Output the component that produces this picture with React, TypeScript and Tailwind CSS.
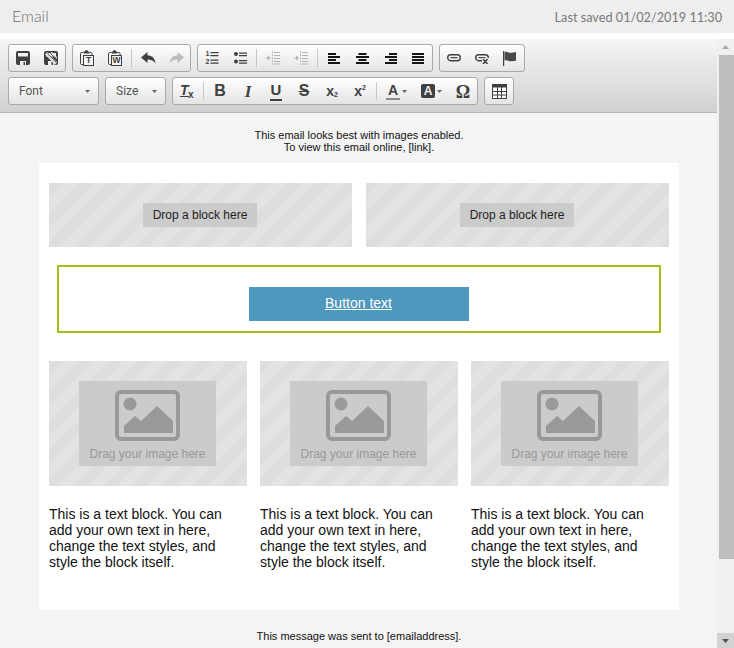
import React from 'react';

const ink = '#3f3f3f';

const Sep = () => (
  <div className="w-[5px] h-full flex items-center justify-center">
    <div className="w-px h-[18px] bg-[#c8c8c8]"></div>
  </div>
);

const Btn = ({ children, wide }: { children: React.ReactNode; wide?: boolean }) => (
  <div className={`${wide ? 'w-[35px]' : 'w-[28px]'} h-full flex items-center justify-center`}>{children}</div>
);

const Group = ({ children }: { children: React.ReactNode }) => (
  <div className="h-[28px] flex border border-[#a9a9a9] rounded-[3px] bg-gradient-to-b from-white to-[#e4e4e4]">{children}</div>
);

const Caret = ({ color = '#666' }: { color?: string }) => (
  <svg width="5" height="3" viewBox="0 0 5 3"><path d="M0 0h5L2.500 3z" fill={color} /></svg>
);

const Select = ({ label, width }: { label: string; width: string }) => (
  <div className={`${width} h-[28px] flex items-center justify-between pl-[10px] pr-[8px] border border-[#a9a9a9] rounded-[3px] bg-gradient-to-b from-white to-[#e4e4e4] text-[12px] text-[#555] [font-family:Roboto,sans-serif]`}>
    <span>{label}</span>
    <Caret />
  </div>
);

const SaveIcon = ({ badge }: { badge?: boolean }) => (
  <svg width="14" height="14" viewBox="0 0 14 14">
    <rect x="0" y="0" width="14" height="14" rx="2" fill={ink} />
    <rect x="2" y="2" width="10" height="3.500" fill="#f0f0f0" />
    <rect x="4" y="10" width="6" height="4" fill="#f0f0f0" />
    <rect x="7.500" y="11" width="1.500" height="3" fill={ink} />
    {badge && <path d="M3 1l10 10-2 3L1 3.500zM8 1l5 5v2L6.500 1.500z" fill="#dcdcdc" />}
    {badge && <path d="M3.500 2.500l8.500 8.500M6 2l7 7" stroke={ink} strokeWidth="0.800" />}
  </svg>
);

const PasteIcon = ({ letter }: { letter: string }) => (
  <span className="relative block w-[14px] h-[16px]">
    <svg width="14" height="16" viewBox="0 0 14 16" className="block">
      <path d="M3 2.500H1.500a1 1 0 0 0-1 1v10a1 1 0 0 0 1 1H3M10 2.500h1a1 1 0 0 1 1 1V5" fill="none" stroke={ink} strokeWidth="1" />
      <path d="M3.500 3.500V1.500h1.500a1.500 1.500 0 0 1 3 0h1.500v2z" fill={ink} />
      <rect x="3.500" y="5.500" width="10" height="10" fill="#f3f3f3" stroke={ink} />
    </svg>
    <span className="absolute left-[4px] top-[6px] w-[9px] text-center text-[8.500px] leading-[9px] font-bold text-[#3f3f3f] [font-family:'Liberation_Sans',sans-serif]">{letter}</span>
  </span>
);

const ArrowIcon = ({ flip, color }: { flip?: boolean; color: string }) => (
  <svg width="15" height="12" viewBox="0 0 15 12" className={flip ? '-scale-x-100' : ''}>
    <path d="M0 5.500L6.500 0v3.500c4.500 0 7.500 2.500 8 8C12.500 8.500 10 7.500 6.500 7.500V11z" fill={color} />
  </svg>
);

const Lines = ({ rows }: { rows: number[][] }) => (
  <svg width="13" height="11" viewBox="0 0 13 11">
    {rows.map(([x, w], i) => (
      <rect key={i} x={x} y={i * 3} width={w} height="2" fill="#161616" />
    ))}
  </svg>
);

const OrderedIcon = () => (
  <span className="relative block w-[13px] h-[14px]">
    <svg width="13" height="14" viewBox="0 0 13 14" className="block">
      <path d="M4.500 1h8v1.200h-8zM4.500 4h8v1.200h-8zM4.500 8.500h8v1.200h-8zM4.500 11.500h8v1.200h-8z" fill={ink} />
    </svg>
    <span className="absolute left-0 top-[-1px] text-[7px] leading-[8px] font-bold text-[#3f3f3f] [font-family:'Liberation_Sans',sans-serif]">1</span>
    <span className="absolute left-0 top-[7px] text-[7px] leading-[8px] font-bold text-[#3f3f3f] [font-family:'Liberation_Sans',sans-serif]">2</span>
  </span>
);

const BulletIcon = () => (
  <svg width="13" height="14" viewBox="0 0 13 14">
    <circle cx="2" cy="3" r="2" fill={ink} />
    <circle cx="2" cy="10.500" r="2" fill={ink} />
    <path d="M5 1.500h8v1.200H5zM5 4h8v1.200H5zM5 9h8v1.200H5zM5 11.500h8v1.200H5z" fill={ink} />
  </svg>
);

const IndentIcon = ({ forward }: { forward?: boolean }) => (
  <svg width="14" height="14" viewBox="0 0 14 14">
    <path d="M6.500 0v14" stroke="#bdbdbd" strokeWidth="1" strokeDasharray="2 1" />
    <path d="M8 1.500h6M8 4.500h6M8 7.500h6M8 10.500h6M8 13h6" stroke="#b5b5b5" strokeWidth="1" />
    {forward ? (
      <path d="M0 6.500h2V4.500L5 7 2 9.500v-2H0z" fill="#b5b5b5" />
    ) : (
      <path d="M5 6.500H3V4.500L0 7l3 2.500v-2h2z" fill="#b5b5b5" />
    )}
  </svg>
);

const LinkIcon = ({ cross }: { cross?: boolean }) => (
  <svg width="14" height="12" viewBox="0 0 14 12">
    <rect x="0.700" y="2.700" width="12.600" height="6" rx="3" fill="none" stroke={ink} strokeWidth="1.400" />
    <path d="M3.500 5.700h7" stroke={ink} strokeWidth="1.200" />
    {cross && <rect x="7" y="6" width="7" height="6" fill="#ececec" />}
    {cross && <path d="M8 7l4.500 5M12.500 7L8 12" stroke={ink} strokeWidth="1.500" />}
  </svg>
);

const FlagIcon = () => (
  <svg width="14" height="15" viewBox="0 0 14 15">
    <path d="M0.600 0v15" stroke={ink} strokeWidth="1.200" />
    <path d="M1.500 1c2.500-1 4 .8 6 .8 2 0 3.500-.4 5.500-.8v8.500c-2 .6-3.500.8-5.500.8-2 0-3.500-1.800-6-.8z" fill="#4a4a4a" />
  </svg>
);

const TableIcon = () => (
  <svg width="15" height="15" viewBox="0 0 15 15">
    <rect x="0.500" y="0.500" width="14" height="14" fill="#fff" stroke={ink} />
    <rect x="0.500" y="0.500" width="14" height="3" fill={ink} />
    <path d="M5.500 3v11M9.500 3v11M1 7.500h13M1 11h13" stroke={ink} />
  </svg>
);

const PictureIcon = () => (
  <svg width="65" height="51" viewBox="0 0 65 51" className="block">
    <rect x="2" y="2" width="61" height="47" rx="4" fill="none" stroke="#999" strokeWidth="4" />
    <circle cx="15" cy="14" r="6.500" fill="#999" />
    <path d="M9 43v-7l11-10 6 5 16-15 16 15v12z" fill="#999" />
  </svg>
);

const Letter = ({ className, children }: { className: string; children: React.ReactNode }) => (
  <span className={`[font-family:'Liberation_Sans',sans-serif] text-[#3f3f3f] leading-none ${className}`}>{children}</span>
);

const stripes = 'bg-[repeating-linear-gradient(135deg,#dedede_0px,#dedede_10.500px,#e3e3e3_10.500px,#e3e3e3_21px)]';

const DropZone = () => (
  <div className={`flex-1 h-[64px] flex items-center justify-center pr-[1px] ${stripes}`}>
    <div className="w-[114px] h-[24px] flex items-center justify-center bg-[#cbcbcb] text-[12px] text-[#222]">Drop a block here</div>
  </div>
);

const ImageColumn = () => (
  <div className="w-[198px]">
    <div className={`h-[125px] flex items-center justify-center pr-[1px] ${stripes}`}>
      <div className="w-[137px] h-[85px] flex flex-col items-center pt-[9px] bg-[#cbcbcb]">
        <PictureIcon />
        <span className="mt-[5px] text-[12px] leading-[16px] text-[#999]">Drag your image here</span>
      </div>
    </div>
    <p className="mt-[20px] text-[14px] leading-[16px] text-[#111]">
      This is a text block. You can add your own text in here, change the text styles, and style the block itself.
    </p>
  </div>
);

export default function App() {
  return (
    <div className="w-[734px] h-[648px] overflow-hidden flex flex-col bg-white [font-family:'Liberation_Sans',Arial,sans-serif]">
      <div className="h-[33px] shrink-0 flex items-center justify-between px-[12px] bg-[#eeeeee] [font-family:Lato,sans-serif]">
        <span className="text-[16px] font-light text-[#6f6f6f] -mt-[2px]">Email</span>
        <span className="text-[12.700px] text-[#7a7a7a] mt-[3px]">Last saved 01/02/2019 11:30</span>
      </div>
      <div className="h-[6px] shrink-0 bg-white"></div>
      <div className="flex-1 flex min-h-0">
        <div className="w-[717px] flex flex-col">
          <div className="h-[74px] shrink-0 flex flex-col gap-[5px] pt-[5px] pl-[8px] border-b border-[#b4b6b4] bg-gradient-to-b from-[#f6f6f6] to-[#cfd1cf]">
            <div className="flex gap-[6px]">
              <Group>
                <Btn><SaveIcon /></Btn>
                <Btn><SaveIcon badge /></Btn>
              </Group>
              <Group>
                <Btn><PasteIcon letter="T" /></Btn>
                <Btn><PasteIcon letter="W" /></Btn>
                <Sep />
                <Btn><ArrowIcon color={ink} /></Btn>
                <Btn><ArrowIcon flip color="#bdbdbd" /></Btn>
              </Group>
              <Group>
                <Btn><OrderedIcon /></Btn>
                <Btn><BulletIcon /></Btn>
                <Sep />
                <Btn><IndentIcon /></Btn>
                <Btn><IndentIcon forward /></Btn>
                <Sep />
                <Btn><Lines rows={[[0, 8], [0, 12], [0, 8], [0, 12]]} /></Btn>
                <Btn><Lines rows={[[2.500, 8], [0, 13], [2.500, 8], [0, 13]]} /></Btn>
                <Btn><Lines rows={[[5, 8], [1, 12], [5, 8], [1, 12]]} /></Btn>
                <Btn><Lines rows={[[0, 12], [0, 12], [0, 12], [0, 12]]} /></Btn>
              </Group>
              <Group>
                <Btn><LinkIcon /></Btn>
                <Btn><LinkIcon cross /></Btn>
                <Btn><FlagIcon /></Btn>
              </Group>
            </div>
            <div className="flex gap-[6px]">
              <Select label="Font" width="w-[91px]" />
              <Select label="Size" width="w-[61px]" />
              <Group>
                <Btn>
                  <span className="relative block w-[16px] h-[16px]">
                    <Letter className="absolute left-[1px] top-0 text-[14px] font-bold italic underline">T</Letter>
                    <Letter className="absolute left-[9px] top-[7px] text-[10px] font-bold">x</Letter>
                  </span>
                </Btn>
                <Sep />
                <Btn><Letter className="text-[16px] font-bold">B</Letter></Btn>
                <Btn><span className="[font-family:'Liberation_Serif',serif] text-[17px] leading-none font-bold italic text-[#3f3f3f]">I</span></Btn>
                <Btn>
                  <span className="flex flex-col items-center">
                    <Letter className="text-[15px] font-bold">U</Letter>
                    <span className="w-[12px] h-[2px] mt-[2px] bg-[#3f3f3f]"></span>
                  </span>
                </Btn>
                <Btn><Letter className="text-[16px] font-bold line-through">S</Letter></Btn>
                <Btn>
                  <span className="flex items-end">
                    <Letter className="text-[14px] font-bold">x</Letter>
                    <Letter className="text-[7px] font-bold">2</Letter>
                  </span>
                </Btn>
                <Btn>
                  <span className="flex items-start">
                    <Letter className="text-[14px] font-bold">x</Letter>
                    <Letter className="text-[7px] font-bold">2</Letter>
                  </span>
                </Btn>
                <Sep />
                <Btn wide>
                  <span className="flex items-center gap-[2px]">
                    <span className="flex flex-col items-center">
                      <Letter className="text-[14px] font-bold">A</Letter>
                      <span className="w-[14px] h-[2px] mt-[1px] bg-[#8a8a8a]"></span>
                    </span>
                    <Caret />
                  </span>
                </Btn>
                <Btn wide>
                  <span className="flex items-center gap-[2px]">
                    <span className="w-[14px] h-[14px] flex items-center justify-center rounded-[2px] bg-[#3f3f3f]">
                      <span className="[font-family:'Liberation_Sans',sans-serif] text-[12px] leading-none font-bold text-[#eee]">A</span>
                    </span>
                    <Caret />
                  </span>
                </Btn>
                <Btn><span className="mt-[1px] [font-family:'Liberation_Serif',serif] text-[18px] leading-none font-bold text-[#3f3f3f]">Ω</span></Btn>
              </Group>
              <Group>
                <Btn><TableIcon /></Btn>
              </Group>
            </div>
          </div>
          <div className="flex-1 min-h-0 overflow-hidden bg-[#f4f4f4] pl-[39px] pr-[38px]">
            <div className="h-[50px] pt-[16px] text-center text-[11px] leading-[12px] text-[#111]">
              <p>This email looks best with images enabled.</p>
              <p>To view this email online, [link].</p>
            </div>
            <div className="h-[447px] bg-white px-[10px] pt-[20px]">
              <div className="flex gap-[14px]">
                <DropZone />
                <DropZone />
              </div>
              <div className="mt-[18px] mx-[8px] h-[68px] flex justify-center pt-[20px] border-2 border-[#9fc11b]">
                <div className="w-[220px] h-[34px] flex items-center justify-center pb-[1px] pr-[1px] bg-[#4f98bd] text-[14px] text-white underline">Button text</div>
              </div>
              <div className="mt-[28px] flex justify-between">
                <ImageColumn />
                <ImageColumn />
                <ImageColumn />
              </div>
            </div>
            <p className="mt-[20px] text-center text-[11px] leading-[12px] text-[#111]">This message was sent to [emailaddress].</p>
          </div>
        </div>
        <div className="w-[17px] flex flex-col bg-[#f0f0f0]">
          <div className="h-[16px] shrink-0 flex items-center justify-center">
            <svg width="7" height="4" viewBox="0 0 7 4"><path d="M3.500 0L7 4H0z" fill="#a8a8a8" /></svg>
          </div>
          <div className="flex-1 min-h-0 pl-[2px]">
            <div className="w-[15px] h-[504px] bg-[#bebebe]"></div>
          </div>
          <div className="h-[15px] shrink-0 flex items-center justify-center bg-[#d2d2d2]">
            <svg width="7" height="4" viewBox="0 0 7 4"><path d="M0 0h7L3.500 4z" fill="#505050" /></svg>
          </div>
        </div>
      </div>
    </div>
  );
}
